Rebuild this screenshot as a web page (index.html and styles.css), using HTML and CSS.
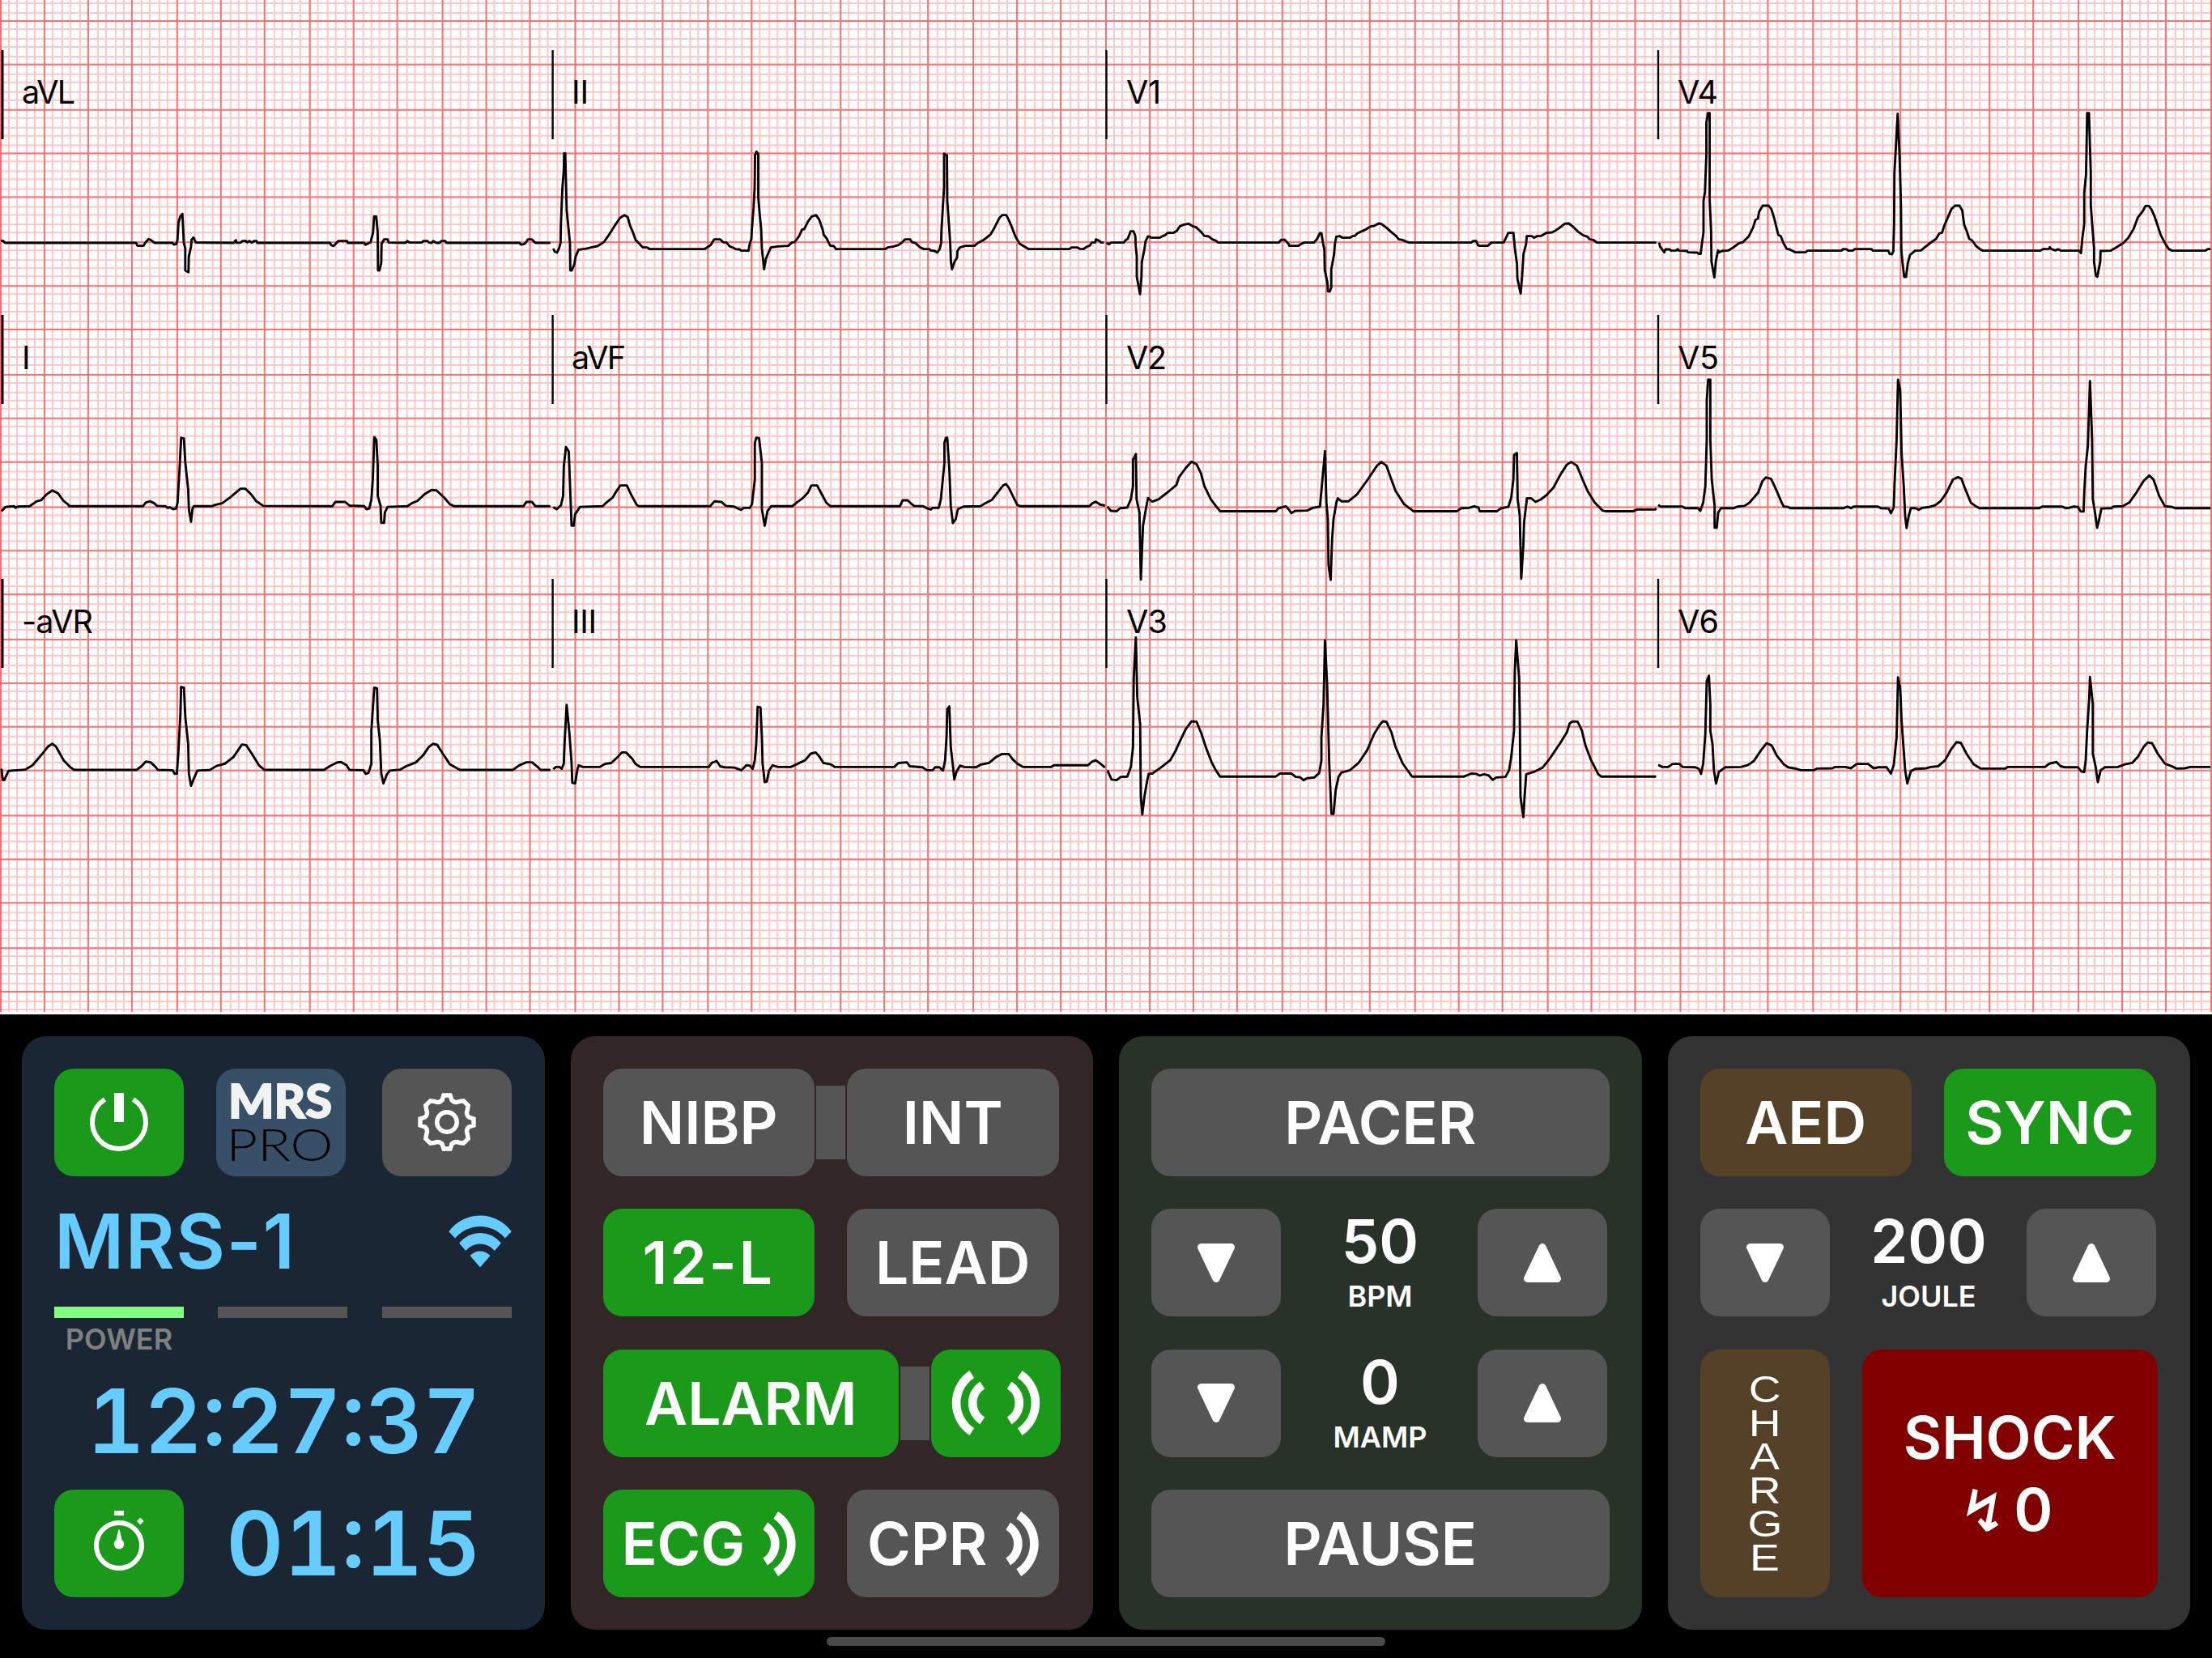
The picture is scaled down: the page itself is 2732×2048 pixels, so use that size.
FILE: index.html
```html
<!DOCTYPE html>
<html lang="en">
<head>
    <meta charset="UTF-8">
    <meta name="viewport" content="width=device-width, initial-scale=1.0">
    <title>MRS-1 Monitor</title>
    <link rel="stylesheet" href="styles.css">
</head>

<body>
    <svg class="ecg" viewBox="0 0 2732 1253">
        <g id="grid" transform="translate(1 2.06) scale(.99927 .9975)"></g>

        <!-- lead separators -->
        <path class="mark wide" d="M3 62V172M3 389V499M3 715V825" />
        <path class="mark" d="M682.6 62V172M682.6 389V499M682.6 715V825M1366.5 62V172M1366.5 389V499M1366.5 715V825M2048 62V172M2048 389V499M2048 715V825" />

        <!-- lead names -->
        <g class="lead">
            <text x="27" y="128" textLength="66">aVL</text>
            <text x="27" y="455.5">I</text>
            <text x="27" y="781.5" textLength="88">-aVR</text>
            <text x="706" y="128" textLength="21">II</text>
            <text x="706" y="455.5" textLength="67">aVF</text>
            <text x="706" y="781.5" textLength="31">III</text>
            <text x="1391" y="128" textLength="43">V1</text>
            <text x="1391" y="455.5" textLength="50">V2</text>
            <text x="1391" y="781.5" textLength="51">V3</text>
            <text x="2072" y="128" textLength="50">V4</text>
            <text x="2072" y="455.5" textLength="51">V5</text>
            <text x="2072" y="781.5" textLength="51">V6</text>
        </g>

        <!-- row 1: aVL, II, V1, V4 -->
        <g class="trace">
            <polyline transform="scale(.44005 .33333)" points="2,893 8,892 14,900 382,900 386,911 403,911 408,899 417,886 424,890 434,900 484,900 488,906 495,904 498,890 501,825 506,802 512,793 516,900 520,920 520,1002 529,1009 530,950 536,915 538,888 543,880 550,899 656,900 662,890 664,900 676,899 680,893 690,893 694,898 700,893 706,899 713,893 720,893 722,900 926,900 930,909 936,912 943,902 950,893 974,893 976,900 1022,900 1026,907 1033,902 1040,898 1047,862 1050,802 1056,802 1060,860 1061,1002 1065,1002 1070,975 1071,903 1078,887 1088,887 1091,899 1138,900 1143,893 1150,899 1184,899 1188,893 1200,893 1204,899 1212,900 1216,893 1224,900 1234,900 1239,893 1250,893 1253,900 1458,900 1462,906 1470,905 1475,900 1482,887 1493,887 1500,897 1504,900 1545,900" />
            <polyline transform="translate(670 40) scale(.44643 .33333)" points="30,801 34,813 40,816 46,800 50,780 51,710 55,580 59,510 60,448 63,448 67,660 76,780 77,882 81,882 88,860 92,830 100,805 118,802 135,797 152,792 170,777 185,748 200,716 215,687 227,677 236,685 242,715 250,740 258,770 268,783 278,797 290,797 297,803 448,803 458,795 466,787 475,767 492,767 500,778 508,778 518,793 528,798 534,803 545,804 550,809 570,809 573,785 578,765 579,735 584,650 587,575 588,455 592,442 597,450 597,610 600,660 605,730 607,800 613,878 618,840 624,820 632,797 652,793 680,791 690,779 698,777 710,755 718,731 724,729 735,700 745,682 757,677 766,695 775,730 778,750 786,763 796,790 806,792 812,803 948,803 955,797 970,794 985,788 995,778 1003,767 1017,767 1022,777 1032,781 1045,797 1055,803 1070,803 1074,808 1085,810 1092,816 1099,803 1103,780 1104,730 1108,640 1111,575 1111,449 1119,455 1120,625 1124,700 1128,780 1130,850 1133,878 1140,850 1147,835 1148,810 1155,797 1170,791 1195,791 1205,780 1220,770 1240,748 1250,725 1264,688 1272,677 1283,677 1290,695 1298,720 1308,755 1320,783 1335,795 1345,803 1458,803 1464,797 1480,797 1486,802 1497,803 1505,795 1514,790 1520,779 1529,778 1531,767 1540,772 1546,779 1553,779" />
            <polyline transform="translate(1350 40) scale(.44643 .33333)" points="37,779 44,785 50,779 85,779 90,770 96,765 104,737 112,737 117,755 118,790 121,830 121,905 130,970 134,905 135,850 142,805 145,775 152,756 158,757 160,761 184,761 192,755 200,751 206,743 222,743 232,735 240,719 250,713 264,709 275,718 285,722 298,738 308,754 320,756 330,767 340,772 346,779 514,779 520,769 530,768 540,782 543,791 568,791 575,784 585,779 611,779 620,765 628,743 632,745 636,780 640,805 641,880 648,925 650,960 655,960 659,945 659,880 667,820 669,785 673,757 683,755 690,761 710,761 718,755 724,754 732,744 745,736 755,730 768,719 778,717 790,708 797,709 812,724 825,740 838,754 846,767 856,769 866,775 875,779 1046,779 1052,773 1060,773 1065,789 1070,791 1092,791 1102,779 1136,779 1144,757 1149,743 1163,743 1167,800 1173,860 1174,912 1183,968 1187,905 1191,820 1198,785 1200,755 1214,755 1220,761 1228,755 1240,754 1254,743 1270,741 1280,734 1290,725 1305,709 1316,708 1328,720 1343,740 1356,752 1368,757 1374,767 1384,769 1394,779 1558,779" />
            <polyline transform="translate(2030 40) scale(.44828 .33333)" points="43,779 45,793 57,815 60,804 72,804 76,809 90,808 94,803 98,809 120,810 122,815 148,816 152,821 157,821 161,780 165,740 165,625 169,590 173,450 173,335 177,299 182,299 182,620 186,740 187,850 195,908 199,850 205,808 208,815 216,810 234,808 246,798 262,782 274,777 290,755 302,722 308,695 315,690 318,665 328,642 344,642 352,655 360,690 371,750 378,755 385,780 394,802 402,804 418,815 446,815 452,809 545,809 550,803 560,804 564,809 576,809 582,803 628,803 632,809 674,809 678,821 684,822 688,812 690,710 691,520 696,400 700,301 705,450 709,640 710,805 713,850 718,906 723,906 728,855 734,825 748,809 764,808 775,796 790,780 806,765 815,745 822,743 828,718 840,680 848,655 858,642 870,642 878,660 883,712 890,735 897,765 905,771 915,790 926,803 935,809 1092,809 1100,803 1117,802 1119,796 1123,803 1135,808 1142,803 1150,809 1200,809 1205,818 1209,760 1214,710 1214,595 1219,525 1222,299 1227,299 1232,520 1232,640 1237,730 1241,800 1241,850 1246,902 1250,906 1258,850 1259,810 1286,809 1298,800 1308,792 1322,780 1335,762 1350,728 1362,685 1375,663 1383,643 1392,643 1400,658 1408,683 1416,715 1425,752 1438,785 1447,803 1456,809 1548,809 1554,803 1562,803" />
        </g>

        <!-- rows 2 and 3, left half: I, aVF, -aVR, III -->
        <g class="trace" transform="translate(0 380) scale(.87372 .40816)">
            <polyline points="2,616 8,603 20,601 22,606 25,602 42,601 52,586 58,583 66,565 74,553 82,562 90,585 96,595 98,601 202,601 206,590 212,586 218,592 222,600 234,601 237,606 240,604 245,610 249,608 251,590 254,480 256,394 260,396 262,470 266,550 267,610 270,648 272,610 274,601 300,601 304,597 314,592 325,575 340,548 347,548 355,565 362,585 372,600 470,601 474,588 488,588 494,599 515,601 518,610 522,608 525,580 527,520 529,392 532,400 534,480 534,570 538,600 539,651 543,651 544,620 548,603 576,601 582,592 590,585 600,565 610,552 617,553 628,575 636,595 642,601 740,601 744,588 752,588 757,601 778,601" />
            <polyline points="782,604 787,610 793,598 796,570 797,480 800,422 804,435 806,550 808,660 811,660 813,625 820,603 852,601 856,592 866,575 870,560 877,538 886,538 892,565 900,597 903,601 1004,601 1010,586 1020,588 1026,600 1038,602 1042,607 1048,612 1051,606 1060,606 1063,595 1067,520 1067,410 1069,394 1073,395 1077,470 1077,610 1081,660 1085,615 1090,601 1120,601 1126,590 1134,578 1142,560 1147,538 1155,538 1160,558 1168,590 1174,601 1272,601 1276,583 1283,583 1288,593 1292,600 1305,601 1310,607 1316,611 1318,606 1327,606 1330,580 1335,470 1335,410 1337,394 1339,394 1342,490 1344,600 1347,652 1351,640 1354,610 1362,602 1386,601 1392,593 1402,582 1410,560 1418,538 1422,534 1426,545 1434,580 1438,597 1442,601 1540,601 1544,592 1549,587 1555,596 1562,599" />
            <polyline points="2,1395 4,1430 6,1430 12,1402 36,1398 46,1385 58,1355 68,1328 74,1320 79,1328 90,1370 100,1392 105,1399 193,1399 200,1388 206,1374 213,1376 220,1390 223,1399 244,1400 247,1411 250,1410 252,1350 255,1230 256,1148 260,1150 262,1240 266,1320 267,1410 270,1447 274,1425 279,1401 297,1399 306,1387 318,1380 330,1360 342,1322 348,1324 356,1350 366,1385 374,1399 458,1399 466,1388 476,1377 482,1375 490,1385 494,1399 514,1400 517,1411 521,1408 525,1380 525,1280 529,1150 533,1152 534,1250 537,1310 539,1410 542,1440 547,1412 551,1401 566,1398 574,1388 588,1376 598,1355 606,1330 612,1320 618,1323 626,1350 636,1382 650,1399 725,1399 734,1385 744,1376 752,1376 760,1390 764,1399 778,1399" />
            <polyline points="782,1397 786,1390 791,1390 794,1396 797,1380 798,1320 801,1202 805,1290 808,1380 809,1438 813,1440 816,1400 818,1385 824,1390 848,1390 855,1381 864,1378 874,1358 879,1346 885,1346 894,1366 898,1380 905,1390 1002,1390 1006,1378 1013,1372 1018,1388 1024,1391 1038,1392 1048,1400 1055,1385 1060,1386 1064,1396 1067,1370 1069,1320 1071,1208 1075,1210 1077,1300 1078,1380 1081,1436 1084,1434 1087,1402 1092,1385 1100,1390 1118,1390 1126,1382 1138,1370 1146,1350 1153,1346 1158,1358 1164,1378 1174,1382 1180,1390 1264,1390 1270,1378 1282,1376 1286,1388 1304,1391 1310,1400 1318,1400 1322,1391 1328,1391 1333,1401 1336,1370 1338,1300 1339,1215 1342,1207 1344,1330 1347,1385 1349,1428 1352,1405 1357,1386 1363,1390 1380,1391 1386,1383 1398,1378 1408,1360 1416,1351 1426,1351 1432,1368 1438,1380 1446,1390 1486,1390 1490,1385 1538,1385 1543,1375 1549,1370 1556,1381 1562,1392" />
        </g>

        <!-- rows 2 and 3, right half: V2, V5, V3, V6 -->
        <g class="trace" transform="translate(1350 380) scale(.88138 .40816)">
            <polyline points="20,602 25,615 33,616 38,607 48,605 53,580 56,540 56,460 60,443 61,580 65,620 67,823 70,660 74,610 77,576 83,587 92,580 105,558 117,536 120,515 130,485 138,466 145,474 151,500 156,540 165,580 172,600 178,616 256,616 260,607 270,601 274,610 278,622 283,615 300,614 308,606 318,602 321,530 325,435 327,590 329,640 330,780 333,824 335,700 337,640 341,590 343,577 348,586 358,586 370,565 385,520 398,478 404,467 411,478 418,520 424,555 436,595 449,616 510,616 516,607 527,606 534,601 540,605 542,616 566,616 572,607 582,603 586,575 589,520 590,445 594,440 595,580 598,630 600,820 603,720 604,650 608,577 614,577 620,588 628,580 636,566 645,545 655,505 664,475 670,467 678,478 686,520 693,555 703,590 714,614 718,616 757,616 762,611 788,611 789,607" />
            <polyline points="792,597 795,602 826,602 830,607 848,607 851,615 855,590 858,540 860,400 860,280 862,218 865,218 865,400 867,520 871,600 871,666 874,666 876,620 880,607 898,607 903,602 913,600 920,590 932,560 938,525 943,514 950,518 956,545 965,590 968,602 974,603 977,607 1052,607 1057,602 1062,607 1066,602 1100,602 1104,607 1115,608 1118,622 1122,605 1123,540 1126,400 1128,218 1131,250 1133,440 1136,540 1138,630 1140,667 1143,630 1146,607 1153,607 1157,612 1162,606 1170,604 1180,598 1188,585 1196,560 1205,520 1212,513 1217,518 1222,548 1230,590 1237,601 1242,607 1326,607 1330,602 1358,602 1363,607 1368,606 1374,602 1380,603 1384,617 1388,617 1389,560 1391,480 1394,420 1397,222 1400,400 1401,580 1404,620 1407,666 1410,640 1413,608 1427,607 1430,602 1443,601 1452,590 1462,560 1472,525 1480,508 1486,520 1494,570 1502,601 1512,603 1516,607 1566,607" />
            <polyline points="20,1400 26,1428 33,1430 39,1420 48,1419 53,1390 56,1330 57,1120 60,998 62,1180 66,1260 67,1480 69,1534 72,1480 76,1430 78,1411 83,1410 95,1392 108,1370 116,1340 120,1320 130,1275 138,1252 145,1253 152,1290 158,1330 166,1375 172,1400 178,1419 256,1419 262,1410 278,1410 284,1420 290,1421 295,1430 300,1424 310,1422 317,1408 320,1370 320,1300 323,1200 325,1007 328,1140 331,1380 333,1480 334,1532 337,1532 340,1460 344,1420 348,1407 360,1400 372,1378 384,1340 394,1290 402,1262 406,1252 411,1253 418,1285 424,1330 434,1380 447,1419 520,1419 530,1410 537,1411 542,1416 548,1412 554,1415 560,1429 565,1422 578,1420 583,1400 586,1360 590,1280 591,1100 593,1007 597,1120 598,1240 599,1480 603,1542 605,1470 607,1412 618,1405 630,1392 640,1365 654,1320 664,1285 668,1258 672,1252 679,1253 685,1280 690,1325 698,1370 708,1412 712,1419 789,1419" />
            <polyline points="792,1384 798,1390 806,1390 812,1381 822,1381 826,1390 844,1391 849,1396 852,1411 855,1380 858,1290 860,1130 863,1114 865,1200 865,1280 868,1320 870,1400 873,1440 877,1405 886,1391 908,1390 918,1384 926,1372 936,1340 944,1318 951,1325 958,1355 968,1382 974,1391 986,1396 992,1400 1010,1400 1014,1395 1036,1394 1040,1390 1054,1390 1062,1394 1070,1381 1086,1381 1094,1394 1100,1391 1112,1391 1118,1410 1122,1385 1126,1300 1128,1119 1131,1150 1133,1250 1136,1340 1138,1400 1141,1440 1146,1403 1152,1396 1168,1394 1174,1390 1184,1388 1194,1370 1202,1338 1210,1315 1216,1317 1224,1350 1234,1382 1244,1395 1278,1395 1282,1390 1334,1390 1340,1380 1350,1375 1356,1388 1362,1391 1380,1391 1385,1404 1389,1405 1391,1370 1393,1280 1396,1180 1397,1118 1401,1200 1401,1350 1405,1390 1408,1436 1412,1400 1418,1391 1436,1390 1446,1382 1456,1378 1464,1360 1472,1330 1478,1316 1484,1318 1492,1350 1502,1380 1512,1388 1518,1395 1530,1394 1538,1390 1566,1390" />
        </g>
    </svg>

    <div class="controls">
        <section class="panel blue">
            <div class="row">
                <button class="btn small on">
                    <svg width="80" height="80" viewBox="-40 -40 80 80">
                        <path d="M-17.5 -28A33 33 0 1 0 17.5 -28" fill="none" stroke="#fff" stroke-width="6" />
                        <rect x="-6" y="-36" width="12" height="36" fill="#fff" />
                    </svg>
                </button>
                <div class="btn small logo">
                    <svg width="160" height="132" viewBox="0 0 160 132">
                        <text class="mrs" x="15" y="61" textLength="128" lengthAdjust="spacingAndGlyphs">MRS</text>
                        <text class="pro" x="12.5" y="114" textLength="132" lengthAdjust="spacingAndGlyphs">PRO</text>
                    </svg>
                </div>
                <button class="btn small push">
                    <svg width="80" height="80" viewBox="-40 -40 80 80" fill="none" stroke="#fff" stroke-width="5.4">
                        <path d="M-4 -33H4L6 -27Q10 -23 14.8 -25.3L20.5 -26.2L26.2 -20.5L25.3 -14.8Q23 -10 27 -6L33 -4V4L27 6Q23 10 25.3 14.8L26.2 20.5L20.5 26.2L14.8 25.3Q10 23 6 27L4 33H-4L-6 27Q-10 23 -14.8 25.3L-20.5 26.2L-26.2 20.5L-25.3 14.8Q-23 10 -27 6L-33 4V-4L-27 -6Q-23 -10 -25.3 -14.8L-26.2 -20.5L-20.5 -26.2L-14.8 -25.3Q-10 -23 -6 -27Z" />
                        <circle r="12.3" />
                    </svg>
                </button>
            </div>
            <div class="row status">
                <div class="device">
                    <span class="name">MRS-1</span>
                    <svg width="78" height="65" viewBox="-39 -64.5 78 65" fill="#66ccff">
                        <path d="M-38.8 -44.3A48 48 0 0 1 38.8 -44.3L30.8 -36A40 40 0 0 0 -30.8 -36Z" />
                        <path d="M-25.9 -29.9A33 33 0 0 1 25.9 -29.9L17.9 -20.6A23.4 23.4 0 0 0 -17.9 -20.6Z" />
                        <path d="M-12.5 -14.4A16.7 16.7 0 0 1 12.5 -14.4L0 0Z" />
                    </svg>
                </div>
                <div class="bars">
                    <div class="bar active"><span>POWER</span></div>
                    <div class="bar"></div>
                    <div class="bar"></div>
                </div>
            </div>
            <div class="row clock">12:27:37</div>
            <div class="row timer">
                <button class="btn small on">
                    <svg width="90" height="100" viewBox="-45 -52 90 100" fill="#fff">
                        <circle r="28" fill="none" stroke="#fff" stroke-width="6" />
                        <rect x="-6" y="-43" width="12" height="6" />
                        <path d="M26.3 -34.5L30.5 -30L26.3 -25.5L22 -30Z" />
                        <path d="M-.8 -19.5H.8L3.5 -7A6.3 6.3 0 1 1 -3.5 -7Z" />
                    </svg>
                </button>
                <span class="elapsed">01:15</span>
            </div>
        </section>

        <section class="panel red">
            <div class="row">
                <button class="btn half">NIBP</button>
                <div class="link"></div>
                <button class="btn half">INT</button>
            </div>
            <div class="row">
                <button class="btn half on digits">12-L</button>
                <button class="btn half">LEAD</button>
            </div>
            <div class="row">
                <button class="btn large on">ALARM</button>
                <div class="link"></div>
                <button class="btn small on">
                    <svg width="112" height="80" viewBox="-56 -40 112 80" fill="none" stroke="#fff" stroke-width="10.6">
                        <path d="M29.7 -35.5A42.4 42.4 0 0 1 29.7 35.5M16.7 -22A26 26 0 0 1 16.7 22M-29.7 -35.5A42.4 42.4 0 0 0 -29.7 35.5M-16.7 -22A26 26 0 0 0 -16.7 22" />
                    </svg>
                </button>
            </div>
            <div class="row">
                <button class="btn half on">ECG
                    <svg class="wave" width="42" height="80" viewBox="12.5 -40 42 80" fill="none" stroke="#fff" stroke-width="10.6">
                        <path d="M29.7 -35.5A42.4 42.4 0 0 1 29.7 35.5M16.7 -22A26 26 0 0 1 16.7 22" />
                    </svg>
                </button>
                <button class="btn half">CPR
                    <svg class="wave" width="42" height="80" viewBox="12.5 -40 42 80" fill="none" stroke="#fff" stroke-width="10.6">
                        <path d="M29.7 -35.5A42.4 42.4 0 0 1 29.7 35.5M16.7 -22A26 26 0 0 1 16.7 22" />
                    </svg>
                </button>
            </div>
        </section>

        <section class="panel green">
            <div class="row">
                <button class="btn full">PACER</button>
            </div>
            <div class="row stepper">
                <button class="btn small">
                    <svg class="arrow" width="48" height="50" viewBox="-24 -25 48 50"><path d="M-18.5 -19.5H18.5L0 19.5Z" /></svg>
                </button>
                <div class="value">
                    <span class="number">50</span>
                    <span class="unit">BPM</span>
                </div>
                <button class="btn small">
                    <svg class="arrow" width="48" height="50" viewBox="-24 -25 48 50"><path d="M-18.5 19.5H18.5L0 -19.5Z" /></svg>
                </button>
            </div>
            <div class="row stepper">
                <button class="btn small">
                    <svg class="arrow" width="48" height="50" viewBox="-24 -25 48 50"><path d="M-18.5 -19.5H18.5L0 19.5Z" /></svg>
                </button>
                <div class="value">
                    <span class="number">0</span>
                    <span class="unit">MAMP</span>
                </div>
                <button class="btn small">
                    <svg class="arrow" width="48" height="50" viewBox="-24 -25 48 50"><path d="M-18.5 19.5H18.5L0 -19.5Z" /></svg>
                </button>
            </div>
            <div class="row">
                <button class="btn full">PAUSE</button>
            </div>
        </section>

        <section class="panel gray">
            <div class="row">
                <button class="btn half brown">AED</button>
                <button class="btn half on">SYNC</button>
            </div>
            <div class="row stepper">
                <button class="btn small">
                    <svg class="arrow" width="48" height="50" viewBox="-24 -25 48 50"><path d="M-18.5 -19.5H18.5L0 19.5Z" /></svg>
                </button>
                <div class="value">
                    <span class="number">200</span>
                    <span class="unit">JOULE</span>
                </div>
                <button class="btn small">
                    <svg class="arrow" width="48" height="50" viewBox="-24 -25 48 50"><path d="M-18.5 19.5H18.5L0 -19.5Z" /></svg>
                </button>
            </div>
            <div class="row tall">
                <button class="btn small brown charge">
                    <span>C</span><span>H</span><span>A</span><span>R</span><span>G</span><span>E</span>
                </button>
                <button class="btn large shock">
                    <span>SHOCK</span>
                    <span class="count">
                        <svg width="40" height="53" viewBox="0 0 40 53" fill="#fff"><path d="M7.5 0L13.7 1.5L11 19L37 4L30.5 42L35.7 39.7L39.3 44.8L27 52.5H23.4L13.7 40.7L17.7 36L23.4 42L28.2 17.5L0 34Z" /></svg>
                        0
                    </span>
                </button>
            </div>
        </section>
    </div>
    <div class="home"></div>

    <script>
        // one small box is 1/250 of the paper width, every 5th line is a heavy one
        const STEP = 10.928;

        function snap(v) {
            return Math.floor(v / 2) * 2;
        }

        let thin = '';
        let heavy = '';

        for (let i = 0; i <= 250; i++) {
            const d = 'M' + snap(i * STEP) + ' -3V1251';
            thin += d;
            if (i % 5 === 0) heavy += d;
        }
        for (let i = -2; i <= 112; i++) {
            const d = 'M0 ' + snap(25.04 + i * STEP) + 'H2732';
            thin += d;
            if (i % 5 === 0) heavy += d;
        }

        document.getElementById('grid').innerHTML =
            '<path class="thin" d="' + thin + '"/><path class="heavy" d="' + heavy + '"/>';
    </script>
</body>

</html>
```

FILE: styles.css
```css
body {
    margin: 0;
    width: 2732px;
    height: 2048px;
    overflow: hidden;
    background-color: #000;
    font-family: Inter, sans-serif;
    font-weight: 570;
    color: #fff;
}

/* ecg paper */
.ecg {
    display: block;
    width: 2732px;
    height: 1253px;
    background-color: #fff;
}

.thin,
.heavy {
    fill: none;
    stroke-width: 2;
}

.thin {
    stroke: rgba(255, 0, 0, 0.22);
}

.heavy {
    stroke: rgba(255, 40, 40, 0.55);
}

.mark {
    stroke: #000;
    stroke-width: 2.4;
}

.mark.wide {
    stroke-width: 3;
}

.lead {
    font-size: 39.5px;
    font-weight: 400;
    fill: #000;
}

.trace polyline {
    fill: none;
    stroke: #000;
    stroke-width: 2.9;
    stroke-linejoin: round;
    vector-effect: non-scaling-stroke;
}

/* control panels */
.controls {
    display: grid;
    grid-template-columns: repeat(4, 1fr);
    gap: 32px;
    padding: 27px 27px 0;
}

.panel {
    box-sizing: border-box;
    height: 733px;
    padding: 40px;
    border-radius: 30px;
    display: flex;
    flex-direction: column;
    gap: 40.6px;
}

.panel.blue {
    background-color: #1a2633;
}

.panel.red {
    background-color: #332626;
}

.panel.green {
    background-color: #283228;
}

.panel.gray {
    background-color: #333;
}

.row {
    height: 132.8px;
    flex: none;
    display: flex;
    gap: 40px;
}

.row.tall {
    height: 306.2px;
}

.btn {
    flex: none;
    display: flex;
    align-items: center;
    justify-content: center;
    height: 100%;
    padding: 0;
    border: 0;
    border-radius: 24px;
    background-color: #555;
    color: #fff;
    font-family: inherit;
    font-size: 73px;
    font-weight: 570;
    line-height: 1;
}

.btn.small {
    width: 160px;
}

.btn.half {
    width: 261.5px;
}

.btn.large {
    width: 365.5px;
}

.btn.full {
    width: 100%;
}

.btn.on {
    background-color: #1a991a;
}

.btn.brown {
    background-color: #554028;
}

.btn.logo {
    background-color: #384f68;
}

.push {
    margin-left: auto;
}

.link {
    width: 36px;
    height: 91px;
    margin: 0 -38px;
    align-self: center;
    background-color: #555;
}

.digits {
    letter-spacing: 3px;
}

.wave {
    margin-left: 21px;
}

.arrow {
    fill: #fff;
    stroke: #fff;
    stroke-width: 9;
    stroke-linejoin: round;
}

/* MRS panel */
.panel.blue .row {
    padding-right: 1px;
}

.mrs {
    font-family: Lato, sans-serif;
    font-size: 58px;
    font-weight: 900;
    fill: #f2f2f2;
    stroke: #f2f2f2;
    stroke-width: 1.8;
}

.pro {
    font-family: Lato, sans-serif;
    font-size: 56px;
    font-weight: 300;
    fill: #000;
}

.status {
    flex-direction: column;
    justify-content: space-between;
    gap: 0;
}

.device {
    display: flex;
    align-items: center;
    justify-content: space-between;
    height: 80px;
}

.name {
    font-size: 93.5px;
    line-height: 80px;
    letter-spacing: 1.5px;
    color: #66ccff;
}

.bars {
    display: flex;
    justify-content: space-between;
    margin-bottom: -1.5px;
}

.bar {
    width: 160px;
    height: 14px;
    background-color: #555;
}

.bar.active {
    background-color: #80ff80;
}

.bar span {
    display: block;
    padding-top: 12px;
    font-size: 36px;
    line-height: 56px;
    text-align: center;
    color: #808080;
}

.clock,
.elapsed {
    font-size: 110px;
    line-height: 133px;
    font-variant-numeric: tabular-nums;
    color: #66ccff;
}

.panel.blue .clock {
    justify-content: flex-end;
    padding: 22px 39px 0 0;
    height: 110.8px;
}

.panel.blue .timer {
    justify-content: space-between;
    padding-right: 39px;
}

/* pacer and joule values */
.stepper {
    justify-content: space-between;
    padding-right: 2.5px;
}

.value {
    display: flex;
    flex-direction: column;
    align-items: center;
    padding-left: 2px;
}

.number {
    font-size: 74px;
    line-height: 80px;
}

.unit {
    font-size: 36px;
    line-height: 56px;
}

.charge {
    flex-direction: column;
    font-family: "Liberation Sans", sans-serif;
    font-size: 46px;
    font-weight: 400;
    line-height: 41.5px;
}

.charge span {
    transform: scaleX(1.2);
}

.charge span:first-child {
    margin-top: 2px;
}

.shock {
    flex-direction: column;
    background-color: #800000;
    line-height: 88.6px;
}

.shock span:first-child {
    margin-top: 2px;
}

.count {
    display: flex;
    align-items: center;
    gap: 18px;
}

.home {
    width: 690px;
    height: 11px;
    margin: 9px auto 0;
    border-radius: 6px;
    background-color: #4a4a4a;
}
```
